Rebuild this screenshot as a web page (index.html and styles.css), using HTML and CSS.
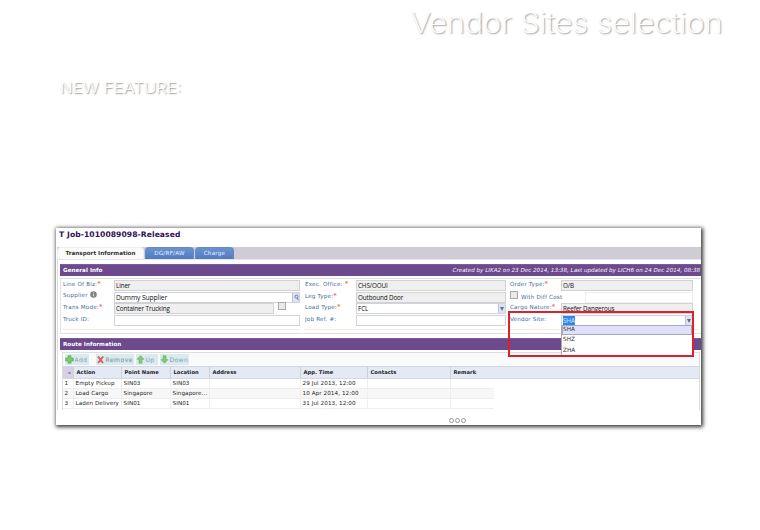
FILE: index.html
```html
<!DOCTYPE html>
<html lang="en">
<head>
<meta charset="utf-8">
<title>Vendor Sites selection</title>
<link rel="stylesheet" href="styles.css">
</head>
<body>
<h1><span>Vendor Sites selection</span></h1>
<h2><span>NEW FEATURE:</span></h2>
<main class="window">
  <div class="job-title">T Job-1010089098-Released</div>
  <nav class="tabs">
    <span class="tab active">Transport Information</span>
    <span class="tab dg">DG/RF/AW</span>
    <span class="tab charge">Charge</span>
  </nav>
  <div class="content">
    <div class="bar general"><b>General Info</b><i>Created by LIKA2 on 23 Dec 2014, 13:38, Last updated by LICH6 on 24 Dec 2014, 08:38</i></div>
    <section class="form">
      <div class="col one">
        <div class="row"><label>Line Of Biz:<em>*</em></label><div class="field">Liner</div></div>
        <div class="row"><label class="up">Supplier <svg class="info" viewBox="0 0 7 7"><circle cx="3.5" cy="3.5" r="3.3" fill="#858585"/><path d="M3.5 3v2.2M3.5 1.5v.8" stroke="#ddd" stroke-width="1"/></svg></label><div class="field white big">Dummy Supplier<span class="search"><svg viewBox="0 0 8 10"><circle cx="4" cy="4" r="1.7"/><path d="M5 5.5L6 8"/></svg></span></div></div>
        <div class="row"><label>Trans Mode:<em>*</em></label><div class="field short">Container Trucking</div><span class="check"></span></div>
        <div class="row"><label>Truck ID:</label><div class="field white"></div></div>
      </div>
      <div class="col two">
        <div class="row"><label>Exec. Office: <em>*</em></label><div class="field">CHS/OOUI</div></div>
        <div class="row"><label>Leg Type:<em>*</em></label><div class="field">Outbound Door</div></div>
        <div class="row"><label>Load Type:<em>*</em></label><div class="field white">FCL<span class="drop"></span></div></div>
        <div class="row"><label>Job Ref. #:</label><div class="field white"></div></div>
      </div>
      <div class="col three">
        <div class="row"><label>Order Type:<em>*</em></label><div class="field">O/B</div></div>
        <div class="row diff"><span class="check"></span><label>With Diff Cost</label><div class="field blank"></div></div>
        <div class="row"><label>Cargo Nature:<em>*</em></label><div class="field">Reefer Dangerous</div></div>
        <div class="row"><label>Vendor Site:</label><div class="field white"><mark>SHA</mark><span class="drop"></span></div>
          <div class="menu"><div class="chosen">SHA</div><div>SHZ</div><div>ZHA</div></div>
          <div class="highlight"></div>
        </div>
      </div>
    </section>
    <div class="bar"><b>Route Information</b></div>
    <section class="route">
      <div class="toolbar">
        <span class="btn add"><svg viewBox="0 0 9 9"><path d="M3 .7h3V3h2.3v3H6v2.3H3V6H.7V3H3z" fill="#7bc96a" stroke="#55a54c" stroke-width=".6"/></svg>Add</span>
        <span class="btn remove"><svg viewBox="0 0 9 9"><path d="M2 1.5L7 8M7.2 1.5L2 8" stroke="#e2585b" stroke-width="2"/></svg>Remove</span>
        <span class="btn go-up"><svg viewBox="0 0 9 9"><path d="M4.5.7L8 4.2H6v4H3v-4H1z" fill="#83cb72" stroke="#64b35b" stroke-width=".6"/></svg>Up</span>
        <span class="btn down"><svg viewBox="0 0 9 9"><path d="M3 .8h3v3.8h2L4.5 8.2 1 4.6h2z" fill="#83cb72" stroke="#64b35b" stroke-width=".6"/></svg>Down</span>
      </div>
      <div class="tr head"><span class="sort"><svg viewBox="0 0 5 3"><path d="M.5 2.5L2.5.7l2 1.8z" fill="#77718c"/></svg></span><span>Action</span><span>Point Name</span><span>Location</span><span>Address</span><span>App. Time</span><span>Contacts</span><span>Remark</span></div>
      <div class="tr"><span>1</span><span>Empty Pickup</span><span>SIN03</span><span>SIN03</span><span></span><span>29 Jul 2013, 12:00</span><span></span><span></span></div>
      <div class="tr even"><span>2</span><span>Load Cargo</span><span>Singapore</span><span>Singapore...</span><span></span><span>10 Apr 2014, 12:00</span><span></span><span></span></div>
      <div class="tr"><span>3</span><span>Laden Delivery</span><span>SIN01</span><span>SIN01</span><span></span><span>31 Jul 2013, 12:00</span><span></span><span></span></div>
    </section>
  </div>
  <footer><i></i><i></i><i></i></footer>
</main>
</body>
</html>
```
FILE: styles.css
```css
* { box-sizing: border-box; }
body { margin: 0; width: 760px; height: 530px; background: #fff; overflow: hidden; font-family: "DejaVu Sans", sans-serif; font-size: 5.6px; color: #222; }
h1, h2 { margin: 0; font-family: Inter, sans-serif; color: #fff; white-space: nowrap; }
h1 { height: 70px; padding: 5px 37px 0 0; text-align: right; font-size: 28px; line-height: 37px; font-weight: 200; text-shadow: 1px 1px 1.5px rgba(0,0,0,.4); }
h1 span { display: inline-block; transform: scaleX(1.1); transform-origin: right; }
h2 { height: 158px; padding: 9px 0 0 60px; font-size: 14.5px; line-height: 18px; font-weight: 300; text-shadow: .7px .8px 1.3px rgba(0,0,0,.42); }
h2 span { display: inline-block; transform: scaleX(1.155); transform-origin: left; }
.window { width: 645px; height: 197px; margin-left: 56px; background: #fff; box-shadow: 1px 1px 4px 1px rgba(0,0,0,.8); overflow: hidden; }
.job-title { height: 19px; padding-left: 3px; font-size: 7.6px; line-height: 14px; letter-spacing: .08px; font-weight: bold; color: #2d1057; white-space: nowrap; }
.tabs { display: flex; height: 12px; margin-left: 1px; background: #d0ccd5; line-height: 13px; gap: 1px; }
.tab { height: 12px; border-radius: 4px 4px 0 0; background: linear-gradient(#6b92cf, #527bc0); color: #e8f2ff; text-align: center; border: 1px solid #648bc8; border-bottom: 0; line-height: 10.5px; letter-spacing: .26px; white-space: nowrap; }
.tab.active { width: 87px; background: #fafafa; border-color: #eee; color: #333; font-weight: bold; letter-spacing: .03px; }
.tab.dg { width: 49px; }
.tab.charge { width: 39px; }
.content { margin-left: 1px; padding-left: 2px; border-left: 1px solid #ddd; border-top: 1px solid #e7e5e9; padding-top: 4px; height: 151px; }
.bar { display: flex; justify-content: space-between; height: 12px; padding: 0 1px 0 3px; background: #6d4a8d; border-top: 1px solid #7c5c99; color: #fff; line-height: 11px; white-space: nowrap; }
.bar b { font-size: 5.6px; letter-spacing: .04px; }
.bar i { font-size: 5.6px; color: #f5effb; }
.form { display: flex; gap: 5px; height: 56px; margin: 2px 0 3.5px; padding: 1px 0 0 2px; border: 1px solid #e3e3e3; border-right: 0; }
.col { height: 50px; border-bottom: 1px solid #eeecdf; }
.one { width: 237px; }
.two { width: 201px; }
.three { width: 188px; margin-left: -1px; }
.row { position: relative; display: flex; width: 100%; height: 12px; }
.row:nth-child(2) { height: 11px; }
.three .row { width: 183px; }
label { width: 51px; flex: none; color: #416d98; line-height: 8px; letter-spacing: .2px; white-space: nowrap; }
.up { margin-top: -1.5px; }
em { color: #e9542e; font-style: normal; font-size: 7px; line-height: 1px; }
.info { width: 7px; height: 7px; vertical-align: -1.5px; }
.field { position: relative; flex: 1; height: 10.5px; padding-left: 1px; background: #efefef; border: 1px solid #d2d2d2; font-family: "Open Sans", sans-serif; font-size: 6.3px; line-height: 9px; letter-spacing: -.1px; color: #111; white-space: nowrap; }
.field.white { background: #fff; border-color: #cfd3de; }
.field.big { font-size: 6.7px; letter-spacing: -.08px; }
.field.short { flex: none; width: 160px; }
.check { width: 8px; height: 8px; margin: -1px 0 0 4px; border: 1px solid #aaa; background: #e9e9e9; }
.search, .drop { position: absolute; right: 0; top: 0; width: 7px; height: 9px; background: #dce3f1; border-left: 1px solid #b9c3d9; }
.search svg { display: block; width: 7px; height: 9px; fill: none; stroke: #52678a; stroke-width: .9; }
.drop::after { content: ""; position: absolute; left: .5px; top: 3px; border: 2.5px solid transparent; border-top: 4px solid #5e6f93; border-bottom: 0; }
.diff .check { margin-left: 0; margin-top: -1px; }
.diff label { width: 67px; padding-left: 3px; line-height: 11px; }
.field.blank { background: #fff; border-color: #eee; }
mark { background: #2e86e8; color: #d7edff; }
.menu { position: absolute; z-index: 2; left: 51px; top: 10px; width: 131px; height: 32px; background: #fff; font-size: 5.7px; letter-spacing: .1px; color: #333; border-left: 1px solid #aaa; }
.menu div { height: 10.3px; line-height: 9px; padding-left: 1px; }
.menu .chosen { background: #e0e0fa; border: 1px solid #a7a7be; line-height: 7.5px; padding-left: 0; }
.highlight { position: absolute; z-index: 3; left: -2px; top: -4px; width: 186px; height: 46px; border: 2px solid #dc202d; }
.route { height: 58.5px; margin: 2px 1px 0 2px; border: 1px solid #ddd; border-bottom: 0; }
.toolbar { display: flex; height: 13px; padding: 1px 0 1px 2px; background: #fafafa; }
.btn { display: flex; align-items: center; height: 11px; color: #8e9e9e; background: #d7ebf1; font-size: 6.1px; letter-spacing: .35px; white-space: nowrap; }
.btn svg { width: 9px; height: 9px; flex: none; margin-right: .5px; }
.add { width: 24px; margin-right: 7px; }
.remove { width: 38px; margin-right: 2px; letter-spacing: .45px; -webkit-text-stroke: .15px #8e9e9e; }
.go-up { width: 22px; margin-right: 2px; }
.down { width: 29px; }
.tr { display: grid; grid-template-columns: 11px 48px 49px 39px 91px 67px 83px 43px; width: 431px; height: 10.3px; line-height: 9.5px; letter-spacing: .1px; border-bottom: 1px solid #eee; white-space: nowrap; }
.tr span { padding-left: 1.5px; border-right: 1px solid #eee; }
.tr span:last-child { border-right: 0; }
.tr.even { background: #f7f7f7; }
.tr.head { width: 100%; height: 13px; background: #e4e9f4; border-top: 1px solid #ddd; border-color: #d2d7e4; font-weight: bold; font-size: 5.2px; line-height: 11px; letter-spacing: .03px; }
.head span { border-color: #ccd1dd; padding-left: 2.5px; }
.head .sort { background: #d6d1e4; }
.sort svg { display: block; width: 5px; height: 3px; margin: 4px 0 0 1px; }
footer { display: flex; gap: 1px; margin: 8px 0 0 393px; }
footer i { width: 5px; height: 5px; border: 1px solid #999; border-radius: 50%; }
```
